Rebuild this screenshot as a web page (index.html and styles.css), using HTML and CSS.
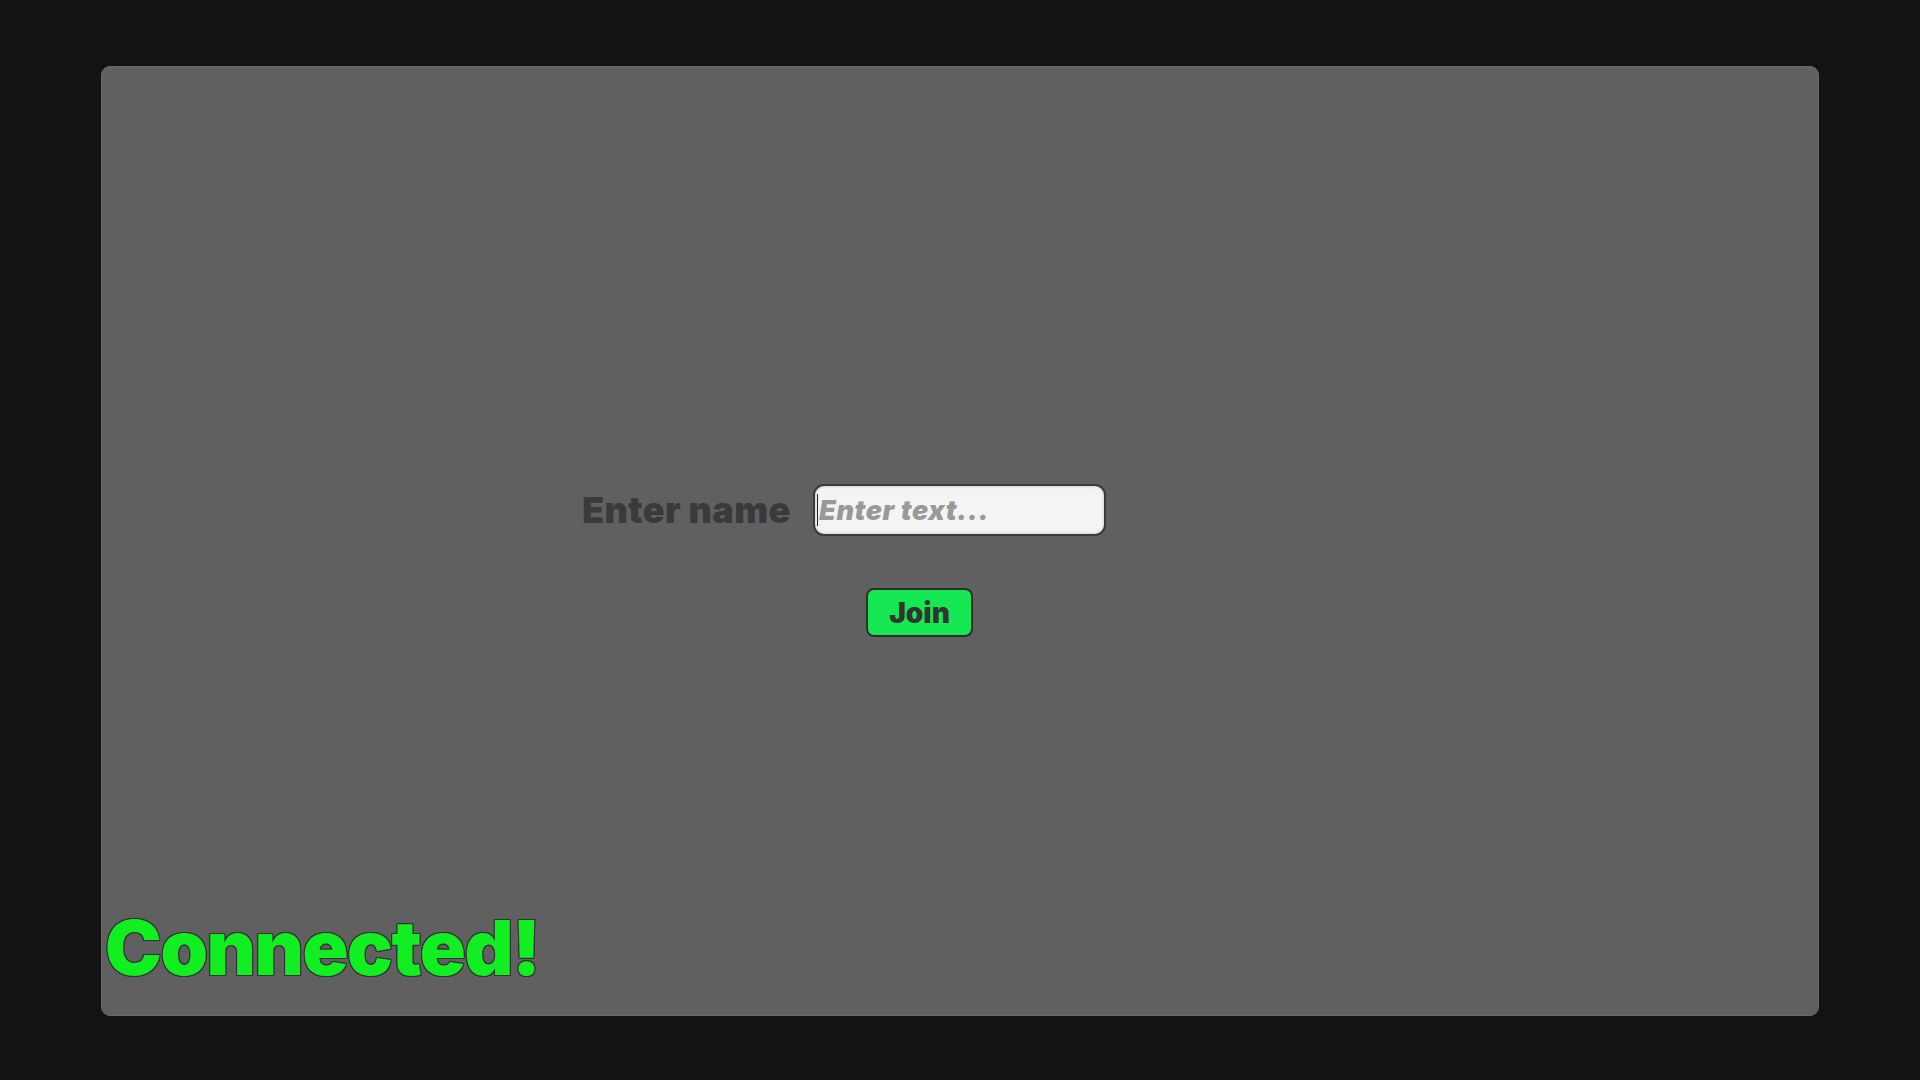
FILE: index.html
```html
<!DOCTYPE html>
<html>
<head>
<meta charset="utf-8">
<link rel="stylesheet" href="styles.css">
</head>
<body>
<main class="panel">
  <div class="form">
    <div class="row">
      <label class="label" for="name">Enter name</label>
      <div class="field">
        <span class="caret"></span>
        <input id="name" class="input" type="text" placeholder="Enter text...">
      </div>
    </div>
    <button class="join">Join</button>
  </div>
  <div class="status">Connected!</div>
</main>
</body>
</html>
```
FILE: styles.css
```css
html, body {
  margin: 0;
  height: 100%;
}
body {
  background: #131313;
  box-sizing: border-box;
  padding: 66px 101px 64px 101px;
  font-family: Inter, "Noto Sans", sans-serif;
}
.panel {
  box-sizing: border-box;
  height: 950px;
  background: #606060;
  border: 1px solid #6a6a6a;
  border-radius: 9px;
  display: flex;
  flex-direction: column;
}
.form {
  margin-top: 417px;
  padding-left: 480px;
  display: flex;
  flex-direction: column;
}
.row {
  display: flex;
  align-items: center;
  gap: 22px;
}
.label {
  font-size: 36px;
  font-weight: 900;
  color: #3a3a3a;
  letter-spacing: 0.4px;
  width: 209px;
  white-space: nowrap;
}
.field {
  position: relative;
  width: 293px;
  height: 52px;
}
.input {
  box-sizing: border-box;
  width: 100%;
  height: 100%;
  border: 2px solid #3a3a3a;
  border-radius: 11px;
  background: #f4f4f4;
  box-shadow: inset 0 0 3px rgba(0,0,0,0.25);
  padding: 0 0 0 4px;
  font-family: Inter, "Noto Sans", sans-serif;
  font-size: 27px;
  font-weight: 900;
  font-style: italic;
  letter-spacing: 0.6px;
  color: #333;
  outline: none;
}
.input::placeholder {
  color: #999999;
}
.caret {
  position: absolute;
  left: 4px;
  top: 10px;
  width: 1px;
  height: 32px;
  background: #222;
}
.join {
  margin-top: 52px;
  margin-left: 284px;
  align-self: flex-start;
  box-sizing: border-box;
  width: 107px;
  height: 49px;
  background: #16e854;
  border: 2px solid #2e2e2e;
  border-radius: 8px;
  font-family: Inter, "Noto Sans", sans-serif;
  font-size: 28px;
  font-weight: 900;
  color: #333333;
  padding: 0;
}
.status {
  margin-top: auto;
  padding: 0 0 30px 3px;
  font-size: 76px;
  font-weight: 900;
  line-height: 76px;
  color: #11ee22;
  letter-spacing: -1.4px;
  text-shadow: 1px 0 0 #333, -1px 0 0 #333, 0 1px 0 #333, 0 -1px 0 #333,
    1px 1px 0 #333, -1px -1px 0 #333, 1px -1px 0 #333, -1px 1px 0 #333;
}
```
